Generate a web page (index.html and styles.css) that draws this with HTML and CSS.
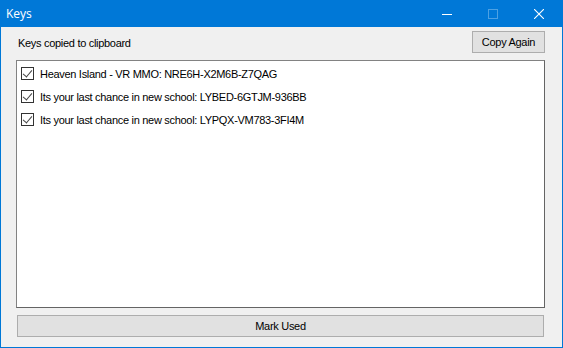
FILE: index.html
```html
<!DOCTYPE html>
<html lang="en">
<head>
    <meta charset="UTF-8">
    <title>Keys</title>
    <link rel="stylesheet" href="styles.css">
</head>
<body>
    <div class="window">
        <header class="titlebar">
            <span class="title">Keys</span>
            <div class="caption-buttons">
                <button class="caption-btn" aria-label="Minimize">
                    <svg viewBox="0 0 10 10" width="10" height="10"><line x1="0" y1="5.5" x2="10" y2="5.5" stroke="#fff" stroke-width="1"/></svg>
                </button>
                <button class="caption-btn disabled" aria-label="Maximize">
                    <svg viewBox="0 0 10 10" width="10" height="10"><rect x="0.5" y="0.5" width="9" height="9" fill="none" stroke="#fff" stroke-width="1"/></svg>
                </button>
                <button class="caption-btn" aria-label="Close">
                    <svg viewBox="0 0 10 10" width="10" height="10"><path d="M0 0L10 10M10 0L0 10" stroke="#fff" stroke-width="1.1"/></svg>
                </button>
            </div>
        </header>

        <main class="client">
            <div class="top-row">
                <span class="label">Keys copied to clipboard</span>
                <button class="win-button copy-btn">Copy Again</button>
            </div>

            <ul class="key-list">
                <li class="key-item"><span class="check"></span>Heaven Island - VR MMO: NRE6H-X2M6B-Z7QAG</li>
                <li class="key-item"><span class="check"></span>Its your last chance in new school: LYBED-6GTJM-936BB</li>
                <li class="key-item"><span class="check"></span>Its your last chance in new school: LYPQX-VM783-3FI4M</li>
            </ul>

            <button class="win-button mark-btn">Mark Used</button>
        </main>
    </div>
</body>
</html>
```

FILE: styles.css
```css
:root {
    --accent: #0078d7;
    --face: #f0f0f0;
    --btn-face: #e1e1e1;
    --btn-border: #adadad;
    --text: #000;
    --font: "Liberation Sans", Arial, sans-serif;
    --title-font: "Open Sans", "Noto Sans", sans-serif;
}
* { margin: 0; padding: 0; box-sizing: border-box; }
body {
    width: 563px; height: 348px; overflow: hidden;
    font-family: var(--font); font-size: 11px; letter-spacing: -0.3px; color: var(--text);
}

.window {
    width: 563px; height: 348px; border: 1px solid var(--accent); border-top: none;
    background: var(--face); display: flex; flex-direction: column;
}
.titlebar { height: 27px; flex: none; background: var(--accent); display: flex; align-items: center; justify-content: space-between; color: #fff; }
.title { font-family: var(--title-font); font-size: 12px; letter-spacing: 0; padding-left: 5px; padding-bottom: 1px; }
.caption-buttons { display: flex; height: 100%; }
.caption-btn { width: 46px; height: 100%; background: none; border: none; display: flex; align-items: center; justify-content: center; }
.caption-btn.disabled svg { opacity: 0.3; }

.client { flex: 1; display: flex; flex-direction: column; padding: 4px 17px 0 15px; }
.top-row { height: 22px; flex: none; display: flex; align-items: center; justify-content: space-between; }
.label { padding-left: 2px; padding-top: 1px; }

.win-button {
    font-family: var(--font); font-size: 11px; letter-spacing: -0.3px; color: var(--text);
    background: var(--btn-face); border: 1px solid var(--btn-border);
}
.copy-btn { width: 73px; height: 22px; }

.key-list {
    list-style: none; height: 248px; flex: none; margin-top: 7px; background: #fff;
    border: 1px solid #828282; border-right-color: #646464; border-bottom-color: #646464;
    padding: 1px 0 0 4px;
}
.key-item { height: 23px; display: flex; align-items: center; gap: 6px; }
.check {
    width: 13px; height: 13px; border: 1px solid #333; position: relative; flex: none;
}
.check::after {
    content: ""; position: absolute; left: 3px; top: 0px; width: 4px; height: 8px;
    border: solid #444; border-width: 0 1.2px 1.2px 0; transform: rotate(40deg);
}

.mark-btn { margin-top: 7px; height: 22px; width: 527px; margin-left: 1px; flex: none; }
```
